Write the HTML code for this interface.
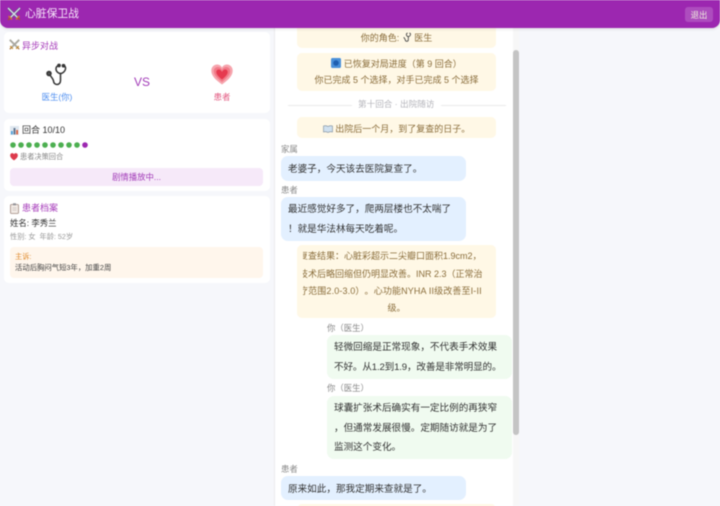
<!DOCTYPE html>
<html lang="zh"><head><meta charset="utf-8">
<style>
html,body{margin:0;padding:0;width:720px;height:506px;overflow:hidden;background:#f6f7fb}
body{position:relative;font-family:"Liberation Sans","Noto Sans CJK SC",sans-serif;filter:blur(.4px);text-spacing-trim:space-all}
.a{position:absolute}
.t{position:absolute;white-space:nowrap;line-height:14px;height:14px}
.c{text-align:center}
.card{position:absolute;left:4px;width:266px;background:#fff;border-radius:5px}
.sys{position:absolute;left:297px;width:199px;background:#fff8e6;border-radius:5px}
.y{color:#8a6d3b;font-size:9px}
.b{position:absolute;left:281px;width:185px;background:#e3f0ff;border-radius:7px}
.g{position:absolute;left:327px;width:185px;background:#f0fbf0;border-radius:7px}
.m{color:#333;font-size:9.6px}
.l{color:#888;font-size:8.4px}
</style></head><body>
<div class="a" style="left:274px;top:0;width:245px;height:506px;background:#fff;border-left:1px solid #ebebef;box-sizing:border-box"></div>
<div class="a" style="left:513px;top:28px;width:6px;height:478px;background:#f7f7f7"></div>
<div class="a" style="left:513px;top:50px;width:6px;height:385px;background:#c4c4c4;border-radius:3px"></div>

<div class="a" style="left:0;top:0;width:720px;height:28px;background:#9c27b0;border-radius:0 0 8px 8px;box-shadow:0 1px 3px rgba(0,0,0,.12);z-index:3"></div>
<svg class="a" style="left:7px;top:7px;z-index:4" width="14" height="14" viewBox="0 0 14 14" fill="none"><path d="M1 1l10 10M13 1L3 11" stroke="#5b5f75" stroke-width="2.400"/><path d="M1 1l10 10M13 1L3 11" stroke="#d9dcea" stroke-width="1.400"/><path d="M1.500 9l3.500 3.500M12.500 9L9 12.500" stroke="#d0703a" stroke-width="1.500"/><path d="M3 11L1 13M11 11l2 2" stroke="#a8503c" stroke-width="1.500"/></svg>
<div class="t" style="left:25px;top:7px;font-size:10.8px;color:#f6e6fa;z-index:4">心脏保卫战</div>
<div class="a" style="left:685px;top:7px;width:28px;height:15px;background:rgba(255,255,255,.18);border-radius:3px;z-index:4"></div>
<div class="t c" style="left:685px;top:7.500px;width:28px;font-size:8.4px;color:#eed;z-index:4">退出</div>

<div class="card" style="top:32px;height:81px"></div>
<svg class="a" style="left:9px;top:39px" width="11" height="11" viewBox="0 0 14 14" fill="none"><path d="M1 1l10 10M13 1L3 11" stroke="#a9a89f" stroke-width="2.400"/><path d="M1.500 9l3.500 3.500M12.500 9L9 12.500" stroke="#c9963a" stroke-width="1.600"/><path d="M3 11L1 13M11 11l2 2" stroke="#a8703c" stroke-width="1.500"/></svg>
<div class="t" style="left:22px;top:39px;font-size:9px;color:#a63cba">异步对战</div>
<svg class="a" style="left:46px;top:63px" width="23" height="23" viewBox="0 0 23 23" fill="none" stroke="#333" stroke-width="1.500"><path d="M13 2.500c-2 .3-3 1.500-3 3.500 0 2.500 2.500 4.500 4.500 4.500s4.500-2 5-4.500c.3-2-.8-3.200-2.500-3.500"/><path d="M14.500 10.500v7c0 2.300-1.500 4-3.500 4s-3.300-1.500-3.500-3.500c-.2-2-2-3.500-3.500-6"/><circle cx="13" cy="2.500" r="1.100" fill="#555"/><circle cx="17.500" cy="2.700" r="1.100" fill="#555"/><circle cx="3" cy="10.500" r="2" fill="#555"/></svg>
<div class="t c" style="left:27px;top:90px;width:60px;font-size:8.4px;color:#4f8ff0">医生(你)</div>
<div class="t c" style="left:122px;top:75px;width:40px;font-size:12px;color:#a23cb8">VS</div>
<svg class="a" style="left:211px;top:64px" width="22" height="21" viewBox="0 0 22 21"><path d="M11 20.500C4 15.500.3 11.500.3 6.500.3 3 3 .5 6 .5c2 0 4 1 5 3 1-2 3-3 5-3 3 0 5.700 2.500 5.700 6 0 5-3.700 9-10.700 14z" fill="#f6a5ae"/><path d="M11 18C6 14 2.800 10.800 2.800 7 2.800 4.500 4.800 3 6.800 3 8.600 3 10.200 4 11 6c.8-2 2.400-3 4.200-3 2 0 4 1.500 4 4 0 3.800-3.200 7-8.200 11z" fill="#f17a88"/><path d="M11 15.500C7.500 12.800 5.300 10.300 5.300 8 5.300 6.500 6.400 5.500 7.800 5.500 9.200 5.500 10.400 6.500 11 8c.6-1.500 1.800-2.500 3.200-2.500 1.400 0 2.500 1 2.500 2.500 0 2.300-2.200 4.800-5.700 7.500z" fill="#e6394f"/></svg>
<div class="t c" style="left:192px;top:90px;width:60px;font-size:8.4px;color:#e2577f">患者</div>

<div class="card" style="top:119px;height:72px"></div>
<svg class="a" style="left:10px;top:126px" width="9" height="9" viewBox="0 0 9 9"><rect width="9" height="9" fill="#dfe7ef"/><rect x="1" y="5" width="1.800" height="3.500" fill="#4f9fd8"/><rect x="3.600" y="2" width="1.800" height="6.500" fill="#5a6f8a"/><rect x="6.200" y="4" width="1.800" height="4.500" fill="#d9603f"/></svg>
<div class="t" style="left:22px;top:123px;font-size:9px;color:#333">回合 10/10</div>
<svg class="a" style="left:10px;top:142px" width="80" height="6"><g fill="#4caf50"><circle cx="3" cy="3" r="2.800"/><circle cx="11" cy="3" r="2.800"/><circle cx="19" cy="3" r="2.800"/><circle cx="27" cy="3" r="2.800"/><circle cx="35" cy="3" r="2.800"/><circle cx="43" cy="3" r="2.800"/><circle cx="51" cy="3" r="2.800"/><circle cx="59" cy="3" r="2.800"/><circle cx="67" cy="3" r="2.800"/></g><circle cx="75" cy="3" r="2.800" fill="#9c27b0"/></svg>
<svg class="a" style="left:10px;top:153px" width="8" height="7.500" viewBox="0 0 22 21"><path d="M11 20.500C4 15.500.3 11.500.3 6.500.3 3 3 .5 6 .5c2 0 4 1 5 3 1-2 3-3 5-3 3 0 5.700 2.500 5.700 6 0 5-3.700 9-10.700 14z" fill="#dd3a4c"/></svg>
<div class="t" style="left:20px;top:150px;font-size:7.2px;color:#888">患者决策回合</div>
<div class="a" style="left:10px;top:168px;width:253px;height:18px;background:#f6e9f9;border-radius:4px"></div>
<div class="t c" style="left:10px;top:170px;width:253px;font-size:8.4px;color:#a23cb8">剧情播放中...</div>

<div class="card" style="top:196px;height:87px"></div>
<svg class="a" style="left:10px;top:203px" width="9" height="11" viewBox="0 0 9 11"><rect x=".5" y="1.500" width="8" height="9" rx="1" fill="#f2ebe6" stroke="#a08a80" stroke-width=".8"/><rect x="3" y=".3" width="3" height="2" fill="#8f8f95"/><path d="M2.500 5h4M2.500 7h4" stroke="#b5aaa5" stroke-width=".6"/></svg>
<div class="t" style="left:22px;top:201px;font-size:9px;color:#a63cba">患者档案</div>
<div class="t" style="left:10px;top:216px;font-size:8.4px;color:#333">姓名: 李秀兰</div>
<div class="t" style="left:10px;top:230px;font-size:7.2px;color:#999">性别: 女&nbsp;&nbsp;年龄: 52岁</div>
<div class="a" style="left:10px;top:247px;width:253px;height:31px;background:#fff6ec;border-radius:4px"></div>
<div class="t" style="left:15px;top:250px;font-size:7.2px;color:#e08a2c">主诉:</div>
<div class="t" style="left:15px;top:261px;font-size:7.35px;color:#444">活动后胸闷气短3年&#xFF0C;加重2周</div>

<div class="sys" style="top:20px;height:28px"></div>
<div class="t c y" style="left:297px;top:31px;width:199px">你的角色: <svg width="10" height="10" viewBox="0 0 23 23" fill="none" stroke="#444" stroke-width="2" style="vertical-align:-1px"><path d="M13 2.500c-2 .3-3 1.500-3 3.500 0 2.500 2.500 4.500 4.500 4.500s4.500-2 5-4.500c.3-2-.8-3.200-2.500-3.500"/><path d="M14.500 10.500v7c0 2.300-1.500 4-3.500 4s-3.300-1.500-3.500-3.500c-.2-2-2-3.500-3.500-6"/></svg> 医生</div>

<div class="sys" style="top:53px;height:38px"></div>
<div class="t c y" style="left:297px;top:57px;width:199px"><svg width="10" height="10" viewBox="0 0 10 10" style="vertical-align:-1px"><rect width="10" height="10" rx="1.500" fill="#4a90d9"/><circle cx="5" cy="5" r="2.800" fill="#1f5fb0"/></svg> 已恢复对局进度&#xFF08;第 9 回合&#xFF09;</div>
<div class="t c y" style="left:297px;top:73px;width:199px">你已完成 5 个选择&#xFF0C;对手已完成 5 个选择</div>

<div class="a" style="left:288px;top:104.500px;width:64px;height:1px;background:#eaeaea"></div>
<div class="a" style="left:441px;top:104.500px;width:65px;height:1px;background:#eaeaea"></div>
<div class="t" style="left:358px;top:97px;font-size:8.6px;color:#b5b5bb">第十回合 · 出院随访</div>

<div class="sys" style="top:117px;height:21px"></div>
<div class="t c y" style="left:297px;top:122px;width:199px"><svg width="10" height="8" viewBox="0 0 10 8" style="vertical-align:-.5px"><path d="M.5 1c1.500-.5 3-.5 4.500.5C6.500.5 8 .5 9.500 1v6C8 6.500 6.500 6.500 5 7.500 3.500 6.500 2 6.500.5 7z" fill="#cfe0ef" stroke="#7a8a9a" stroke-width=".6"/></svg> 出院后一个月&#xFF0C;到了复查的日子。</div>

<div class="t l" style="left:281px;top:142px">家属</div>
<div class="b" style="top:156px;height:25px"></div>
<div class="t m" style="left:288px;top:163px">老婆子&#xFF0C;今天该去医院复查了。</div>

<div class="t l" style="left:281px;top:183px">患者</div>
<div class="b" style="top:197px;height:44px"></div>
<div class="t m" style="left:288px;top:203px">最近感觉好多了&#xFF0C;爬两层楼也不太喘了</div>
<div class="t m" style="left:288px;top:223px">&#xFF01;就是华法林每天吃着呢。</div>

<div class="sys" style="top:245px;height:73px"></div>
<div class="a" style="left:303px;top:245px;width:187px;height:73px;overflow:hidden">
<div class="t y" style="left:-4px;top:4px">复查结果&#xFF1A;心脏彩超示二尖瓣口面积1.9cm2&#xFF0C;</div>
<div class="t y" style="left:-4px;top:21.500px">技术后略回缩但仍明显改善。INR 2.3&#xFF08;正常治</div>
<div class="t y" style="left:-4px;top:38.500px;letter-spacing:.14px">疗范围2.0-3.0&#xFF09;。心功能NYHA II级改善至I-II</div>
<div class="t c y" style="left:0;top:55.500px;width:187px">级。</div>
</div>

<div class="t l" style="left:327px;top:321px">你&#xFF08;医生&#xFF09;</div>
<div class="g" style="top:335px;height:44px"></div>
<div class="t m" style="left:334px;top:341px">轻微回缩是正常现象&#xFF0C;不代表手术效果</div>
<div class="t m" style="left:334px;top:361px;letter-spacing:-.15px">不好。从1.2到1.9&#xFF0C;改善是非常明显的。</div>

<div class="t l" style="left:327px;top:381px">你&#xFF08;医生&#xFF09;</div>
<div class="g" style="top:396px;height:63px"></div>
<div class="t m" style="left:334px;top:402px">球囊扩张术后确实有一定比例的再狭窄</div>
<div class="t m" style="left:334px;top:422px">&#xFF0C;但通常发展很慢。定期随访就是为了</div>
<div class="t m" style="left:334px;top:441px">监测这个变化。</div>

<div class="t l" style="left:281px;top:462px">患者</div>
<div class="b" style="top:476px;height:24px"></div>
<div class="t m" style="left:288px;top:482.500px">原来如此&#xFF0C;那我定期来查就是了。</div>
<div class="sys" style="top:504px;height:10px"></div>
</body></html>
